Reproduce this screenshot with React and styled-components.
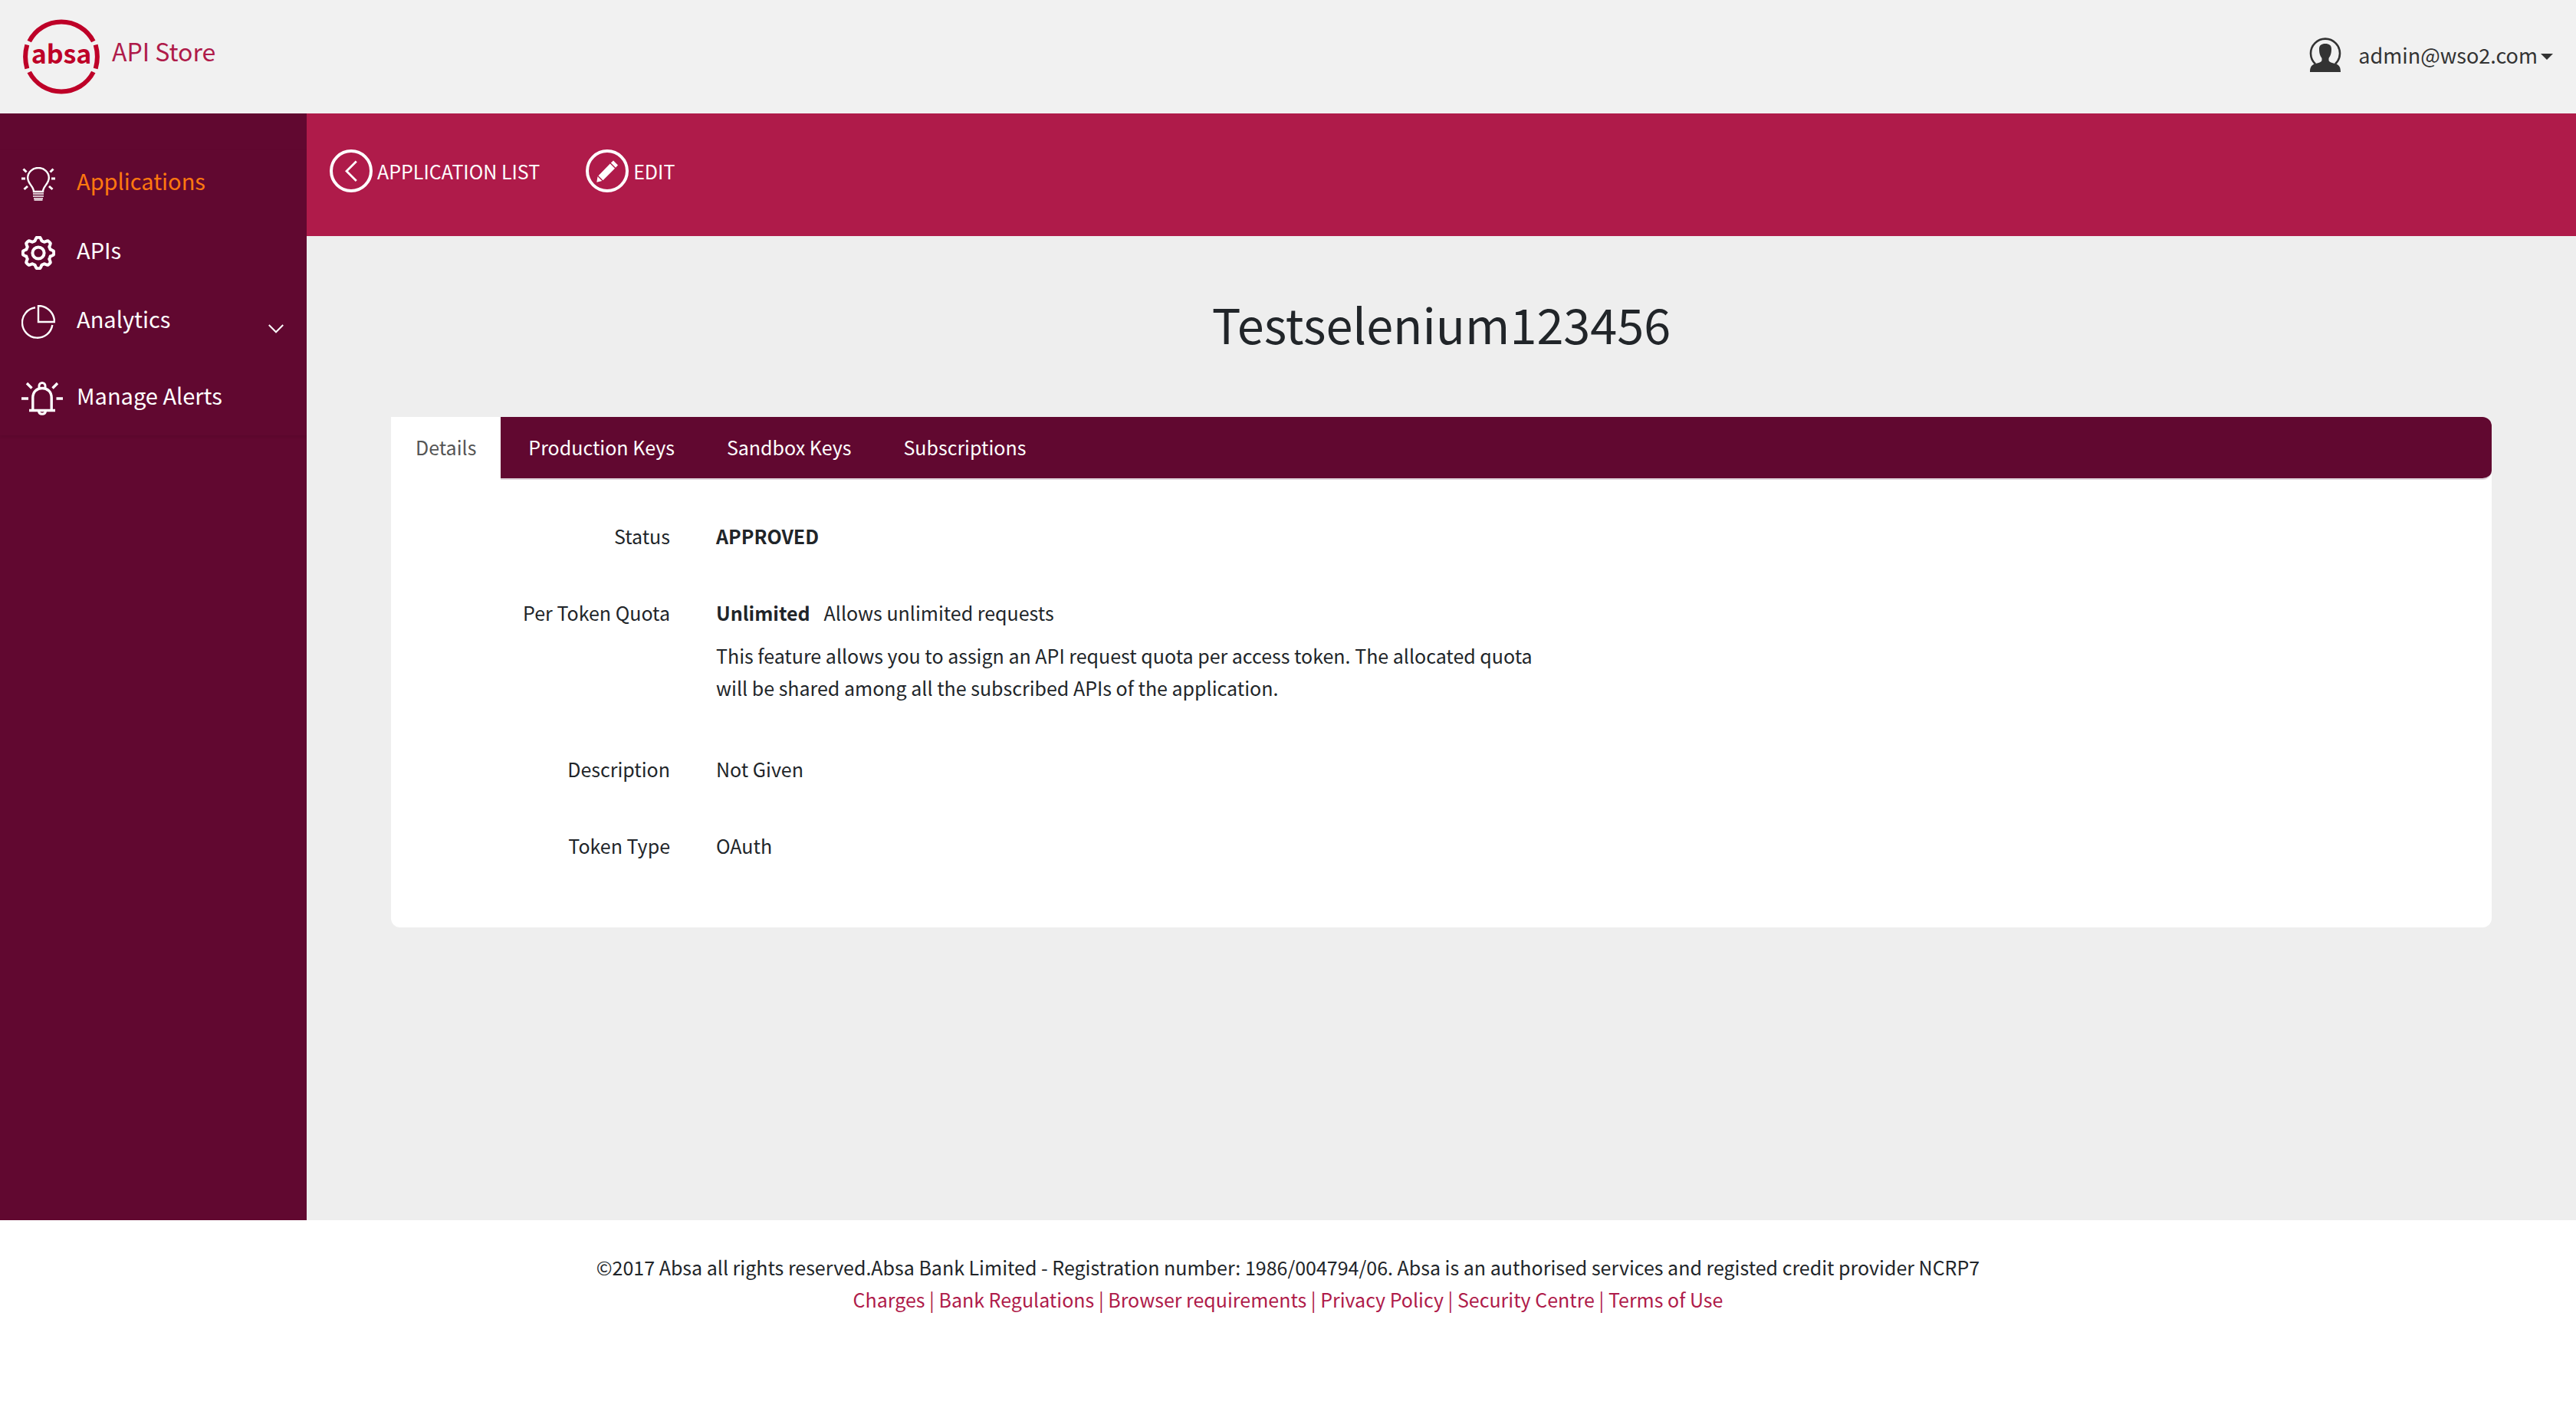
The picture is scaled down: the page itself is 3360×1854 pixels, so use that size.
import React from 'react';
import styled, { createGlobalStyle } from 'styled-components';

const GlobalStyle = createGlobalStyle`
  *, *::before, *::after { box-sizing: border-box; }
  html, body { margin: 0; }
  body {
    background: #ffffff;
    color: #212529;
    font-family: 'Noto Sans CJK SC', 'Noto Sans', sans-serif;
    font-size: 25px;
    line-height: 42px;
  }
  a { color: inherit; text-decoration: none; }
  button { font: inherit; border: 0; background: none; padding: 0; cursor: pointer; }
`;

const Page = styled.div`
  min-height: 100vh;
  display: flex;
  flex-direction: column;
`;

const Header = styled.header`
  height: 148px;
  padding: 0 30px;
  display: flex;
  align-items: center;
  justify-content: space-between;
  background: #f1f1f1;
`;

const Brand = styled.a`
  display: flex;
  align-items: center;
  gap: 16px;
  color: #af1b4a;
  font-size: 32px;
  line-height: 48px;
`;

const BrandName = styled.span`
  padding-bottom: 16px;
`;

const UserMenu = styled.button`
  padding-bottom: 4px;
  display: flex;
  align-items: center;
  color: #333333;
  font-size: 27px;
  line-height: 48px;
`;

const UserName = styled.span`
  margin: 0 4px 0 22px;
`;

const Body = styled.div`
  flex: 1;
  display: flex;
`;

const Sidebar = styled.aside`
  flex: 0 0 400px;
  padding-top: 48px;
  background: #610830;
`;

const Menu = styled.ul`
  margin: 0;
  padding: 0 30px 2px 28px;
  display: flex;
  flex-direction: column;
  list-style: none;
  box-shadow: 0 2px 4px rgba(0, 0, 0, 0.08);
`;

const MenuItem = styled.li`
  height: ${(p) => (p.$tall ? 100 : 90)}px;
`;

const MenuLink = styled.a`
  height: 88px;
  display: flex;
  align-items: center;
  color: ${(p) => (p.$active ? '#ff780f' : '#ffffff')};
  font-size: 29px;
`;

const MenuIcon = styled.span`
  width: 72px;
  height: 44px;
  flex: none;
  display: flex;
  color: #ffffff;
`;

const MenuText = styled.span`
  flex: 1;
  padding-bottom: 10px;
`;

const ChevronBox = styled.span`
  display: flex;
  padding-top: 18px;
`;

const Main = styled.main`
  flex: 1;
  min-width: 0;
  background: #eeeeee;
`;

const Toolbar = styled.nav`
  height: 160px;
  padding: 0 30px 10px;
  display: flex;
  align-items: center;
  gap: 60px;
  background: #af1b4a;
`;

const ToolLink = styled.a`
  display: flex;
  align-items: center;
  gap: 6px;
  color: #ffffff;
`;

const Content = styled.div`
  padding: 72px 110px 0;
`;

const Title = styled.h1`
  margin: 0 0 80px;
  text-align: center;
  font-size: 63px;
  font-weight: 400;
  line-height: 84px;
`;

const Panel = styled.section`
  min-height: 666px;
  border-radius: 0 12px 12px 12px;
  background: #ffffff;
`;

const Tabs = styled.div`
  height: 82px;
  display: flex;
  gap: 4px;
  border-bottom: 2px solid #dfd3da;
  border-radius: 0 12px 12px 0;
  background: #610830;
`;

const Tab = styled.button`
  height: 82px;
  padding: 0 32px 4px;
  background: ${(p) => (p.$active ? '#ffffff' : 'transparent')};
  color: ${(p) => (p.$active ? '#555555' : '#ffffff')};
`;

const Details = styled.dl`
  margin: 0;
  padding: 52px 0 54px;
  display: grid;
  grid-template-columns: 364px minmax(0, 1080px);
  column-gap: 60px;
  row-gap: 58px;
`;

const Label = styled.dt`
  text-align: right;
`;

const Value = styled.dd`
  margin: 0;
`;

const Strong = styled.strong`
  font-weight: 700;
  margin-right: 18px;
`;

const Hint = styled.p`
  margin: 14px 0 6px;
`;

const Footer = styled.footer`
  height: 262px;
  padding-top: 40px;
  text-align: center;

  p { margin: 0; }
`;

const FooterLinks = styled.p`
  color: #af1b4a;
`;

const AbsaLogo = () => (
  <svg width="100" height="100" viewBox="0 0 100 100" role="img" aria-label="absa">
    <g fill="none" stroke="#be0028" strokeWidth="6">
      <path d="M8.2 30 A47 47 0 0 1 91.8 30" />
      <path d="M8.2 70 A47 47 0 0 0 91.8 70" />
      <path d="M5.3 34.5 Q0.9 50 5.3 65.5" />
      <path d="M94.7 34.5 Q99.1 50 94.7 65.5" />
    </g>
    <text x="50" y="59" textAnchor="middle" fill="#be0028" fontFamily="'Noto Sans CJK SC', sans-serif" fontWeight="700" fontSize="34">absa</text>
  </svg>
);

const UserIcon = () => (
  <svg width="42" height="46" viewBox="0 0 42 46" aria-hidden="true">
    <path d="M8 34.5 A19 19 0 1 1 34 34.5" fill="none" stroke="currentColor" strokeWidth="2.6" />
    <path fill="currentColor" d="M21 8c5 0 8 2 8 7 0 6-1.5 9-3.500 12v3c1 2.500 4 3 8 4 5 1.200 7.500 4 7.500 11H1c0-7 2.500-9.800 7.500-11 4-1 7-1.500 8-4v-3c-2-3-3.500-6-3.500-12 0-5 3-7 8-7z" />
  </svg>
);

const Caret = () => (
  <svg width="16" height="12" viewBox="0 0 16 12" aria-hidden="true">
    <path d="M0 4h16L8 12z" fill="currentColor" />
  </svg>
);

const BulbIcon = () => (
  <svg width="44" height="44" viewBox="0 0 44 44" fill="none" stroke="currentColor" strokeWidth="2.4" aria-hidden="true">
    <path d="M16 32c0-7-7.800-10-7.800-18a13.800 13 0 0 1 27.600 0c0 8-7.800 11-7.800 18z" />
    <path d="M15 35h14M15 38h14M16 41h12M16.500 43h11" strokeWidth="1.7" />
    <path d="M0 15h5M39 15h5M2.500 2.500l4 4M41.500 2.500l-4 4M3.500 29l4.500-4M40.500 29L36 25" strokeWidth="3" />
  </svg>
);

const gearPath = (() => {
  const pts = [];
  for (let i = 0; i <= 160; i += 1) {
    const a = (i / 160) * Math.PI * 2;
    const wave = Math.max(-1, Math.min(1, Math.cos(a * 8) * 1.6));
    const r = 18.2 + wave * 2;
    pts.push(`${(22 + r * Math.sin(a)).toFixed(2)} ${(22 - r * Math.cos(a)).toFixed(2)}`);
  }
  return `M${pts.join('L')}Z`;
})();

const GearIcon = () => (
  <svg width="44" height="44" viewBox="0 0 44 44" fill="none" stroke="currentColor" strokeWidth="4" strokeLinejoin="round" aria-hidden="true">
    <path d={gearPath} />
    <circle cx="22" cy="22" r="7.6" />
  </svg>
);

const PieIcon = () => (
  <svg width="44" height="44" viewBox="0 0 44 44" fill="none" stroke="currentColor" strokeWidth="2.4" aria-hidden="true">
    <path d="M18 3.300A19.800 19.800 0 1 0 40.300 26" />
    <path d="M22 1v21h21A21 21 0 0 0 22 1z" />
  </svg>
);

const BellIcon = () => (
  <svg width="54" height="44" viewBox="0 0 54 44" fill="none" stroke="currentColor" strokeWidth="3.4" aria-hidden="true">
    <path d="M10 37.500h34M14.800 37V21c0-8 5.500-12.500 12.200-12.500S39.200 13 39.200 21v16" />
    <path d="M23 8.500V5.500a4 4 0 0 1 8 0v3M22.500 38.500c.5 5 8.500 5 9 0" strokeWidth="3" />
    <path d="M0 22h9M45.500 22H54M7 2l6.500 6.500M47 2l-6.500 6.500" />
  </svg>
);

const ChevronDown = () => (
  <svg width="20" height="12" viewBox="0 0 20 12" fill="none" stroke="currentColor" strokeWidth="2" aria-hidden="true">
    <path d="M.8 1L10 10.300 19.200 1" />
  </svg>
);

const BackIcon = () => (
  <svg width="56" height="56" viewBox="0 0 56 56" fill="none" stroke="currentColor" aria-hidden="true">
    <circle cx="28" cy="28" r="26" strokeWidth="4" />
    <path d="M34.800 15.500L22 28.300l12.800 12.800" strokeWidth="2.8" />
  </svg>
);

const EditIcon = () => (
  <svg width="56" height="56" viewBox="0 0 56 56" aria-hidden="true">
    <circle cx="28" cy="28" r="26" fill="none" stroke="currentColor" strokeWidth="4" />
    <path fill="currentColor" d="M36 14.500l6 6-3 3.200-6.200-6.200zM31.800 18.500l6.200 6.200L22.500 40.200l-6-6zM15.500 35.300l5.800 5.800-7 1.700z" />
  </svg>
);

const menu = [
  { label: 'Applications', Icon: BulbIcon, active: true },
  { label: 'APIs', Icon: GearIcon },
  { label: 'Analytics', Icon: PieIcon, expandable: true },
  { label: 'Manage Alerts', Icon: BellIcon },
];

const tabs = ['Details', 'Production Keys', 'Sandbox Keys', 'Subscriptions'];

const footerLinks = [
  'Charges',
  'Bank Regulations',
  'Browser requirements',
  'Privacy Policy',
  'Security Centre',
  'Terms of Use',
];

export default function App() {
  return (
    <Page>
      <GlobalStyle />
      <Header>
        <Brand href="#home">
          <AbsaLogo />
          <BrandName>API Store</BrandName>
        </Brand>
        <UserMenu type="button">
          <UserIcon />
          <UserName>admin@wso2.com</UserName>
          <Caret />
        </UserMenu>
      </Header>
      <Body>
        <Sidebar>
          <Menu>
            {menu.map(({ label, Icon, active, expandable }) => (
              <MenuItem key={label} $tall={expandable}>
                <MenuLink href={`#${label}`} $active={active}>
                  <MenuIcon>
                    <Icon />
                  </MenuIcon>
                  <MenuText>{label}</MenuText>
                  {expandable && (
                    <ChevronBox>
                      <ChevronDown />
                    </ChevronBox>
                  )}
                </MenuLink>
              </MenuItem>
            ))}
          </Menu>
        </Sidebar>
        <Main>
          <Toolbar>
            <ToolLink href="#list">
              <BackIcon />
              APPLICATION LIST
            </ToolLink>
            <ToolLink href="#edit">
              <EditIcon />
              EDIT
            </ToolLink>
          </Toolbar>
          <Content>
            <Title>Testselenium123456</Title>
            <Panel>
              <Tabs role="tablist">
                {tabs.map((name, i) => (
                  <Tab key={name} type="button" role="tab" aria-selected={i === 0} $active={i === 0}>
                    {name}
                  </Tab>
                ))}
              </Tabs>
              <Details>
                <Label>Status</Label>
                <Value>
                  <Strong>APPROVED</Strong>
                </Value>
                <Label>Per Token Quota</Label>
                <Value>
                  <Strong>Unlimited</Strong>
                  Allows unlimited requests
                  <Hint>
                    This feature allows you to assign an API request quota per access token. The
                    allocated quota will be shared among all the subscribed APIs of the application.
                  </Hint>
                </Value>
                <Label>Description</Label>
                <Value>Not Given</Value>
                <Label>Token Type</Label>
                <Value>OAuth</Value>
              </Details>
            </Panel>
          </Content>
        </Main>
      </Body>
      <Footer>
        <p>
          ©2017 Absa all rights reserved.Absa Bank Limited - Registration number: 1986/004794/06.
          Absa is an authorised services and registed credit provider NCRP7
        </p>
        <FooterLinks>
          {footerLinks.map((name, i) => (
            <React.Fragment key={name}>
              {i > 0 && ' | '}
              <a href={`#${name}`}>{name}</a>
            </React.Fragment>
          ))}
        </FooterLinks>
      </Footer>
    </Page>
  );
}
